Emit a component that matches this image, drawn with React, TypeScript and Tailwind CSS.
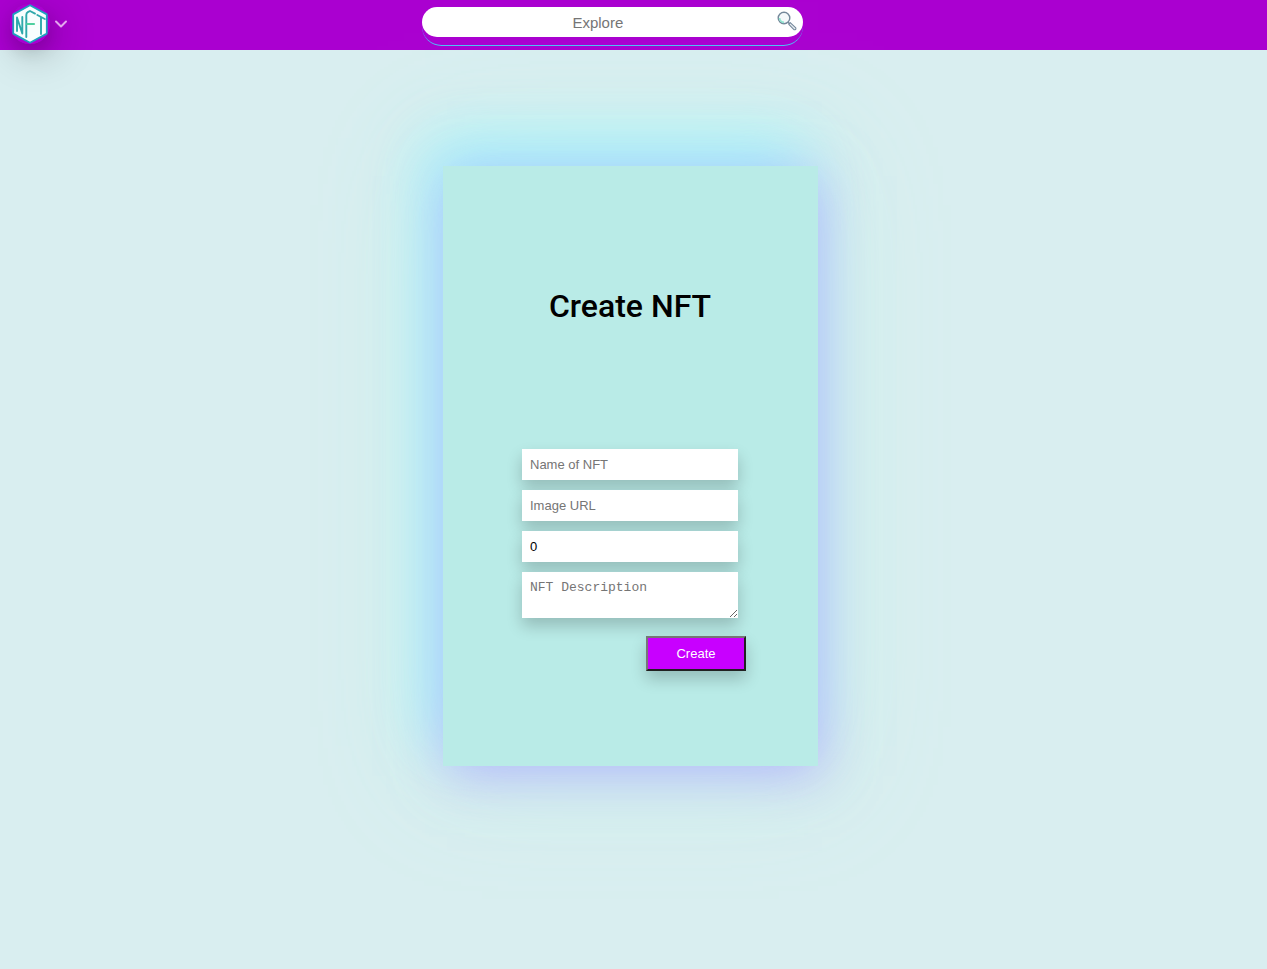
import React, { useState } from "react";

function Logo() {
  return (
    <svg viewBox="0 0 40 40" className="size-10" aria-hidden="true">
      <circle cx="20" cy="20" r="20" fill="#aa00d0" />
      <path d="M20 1.2 36.8 10.4V29.6L20 38.8 3.2 29.6V10.4Z" fill="#f8fefe" stroke="#1f9fc0" strokeWidth="1.8" strokeLinejoin="round" />
      <g fill="none" stroke="#2fa9ac" strokeWidth="1.9" strokeLinecap="round" strokeLinejoin="round">
        <path d="M7 27V13.500L12.300 29.500V13" />
        <path d="M16.300 33V11Q16.300 9 17.800 8.200L20 7 25 9.600" />
        <path d="M27.300 11 34.800 15M31 13V30" />
      </g>
      <path d="M17 20H24" fill="none" stroke="#4fd0a0" strokeWidth="2.2" strokeLinecap="round" />
    </svg>
  );
}

function SearchIcon() {
  return (
    <svg viewBox="0 0 20 20" className="size-5" fill="none" aria-hidden="true">
      <circle cx="7" cy="7" r="5.800" fill="#f4f8fa" stroke="#74889a" strokeWidth="1.400" />
      <path d="M2.600 7A4.500 4.500 0 0 0 7 11.300" stroke="#8fe6cf" strokeWidth="1.700" />
      <path d="M11 11.200 12.600 12.800" stroke="#74889a" strokeWidth="1.600" />
      <path d="M13.200 11.600 18.800 16.800Q19.300 18.800 17.200 18.800L11.800 13.400Z" fill="#e9edf2" stroke="#74889a" strokeWidth="1.100" strokeLinejoin="round" />
    </svg>
  );
}

function Header() {
  return (
    <header className="grid h-[50px] grid-cols-3 bg-[#aa00d0]">
      <div className="flex items-start pl-2.5 pt-1">
        <button type="button" aria-label="Menu" className="flex items-center gap-1">
          <span className="rounded-full shadow-[0_8px_16px_rgba(0,0,0,0.12),6px_10px_40px_rgba(0,0,0,0.25)]">
            <Logo />
          </span>
          <svg viewBox="0 0 14 10" className="h-2.5 w-3.5" fill="none" aria-hidden="true">
            <path d="M2 2.500 7 7.500 12 2.500" stroke="#e2a6ee" strokeWidth="2" strokeLinecap="round" strokeLinejoin="round" />
          </svg>
        </button>
      </div>
      <form className="relative mt-[7px] h-[39px] w-[381px] rounded-[20px] border-b border-[#4cc3f5]" onSubmit={(e) => e.preventDefault()}>
        <input
          aria-label="Explore"
          placeholder="Explore"
          className="block h-[30px] w-full rounded-full bg-white pl-3 pr-[42px] text-center text-[15px] text-black outline-none placeholder:text-[#757575]"
        />
        <button type="submit" aria-label="Search" className="absolute right-1.5 top-1">
          <SearchIcon />
        </button>
      </form>
    </header>
  );
}

const field =
  "block w-full bg-white px-2 text-[13px] text-black outline-none placeholder:text-[#757575] shadow-[0_8px_16px_rgba(0,0,0,0.2)]";

export default function App() {
  const [price, setPrice] = useState("0");
  return (
    <div className="min-h-screen bg-[#d9eef0] font-['Liberation_Sans',Arial,sans-serif]">
      <Header />
      <main className="flex justify-center pb-10 pr-1.5 pt-[116px]">
        <section className="flex h-[600px] w-[375px] flex-col items-center bg-[#b9ebe7] pr-px pt-[116px] shadow-[4px_10px_50px_rgba(180,150,255,0.65),-14px_-24px_60px_4px_rgba(150,245,255,0.8),0_0_110px_rgba(200,255,230,0.7)]">
          <h1 className="font-['Roboto',sans-serif] text-[32px] font-medium leading-[48px] text-black">Create NFT</h1>
          <form className="mt-[119px] flex w-[232px] flex-col" onSubmit={(e) => e.preventDefault()}>
            <div className="flex flex-col gap-2.5 px-2">
              <input aria-label="Name of NFT" placeholder="Name of NFT" className={`${field} h-[31px]`} />
              <input aria-label="Image URL" placeholder="Image URL" className={`${field} h-[31px]`} />
              <input aria-label="Price" inputMode="decimal" value={price} onChange={(e) => setPrice(e.target.value)} className={`${field} h-[31px]`} />
              <textarea
                aria-label="NFT Description"
                placeholder="NFT Description"
                className={`${field} h-[46px] resize py-2 font-['Liberation_Mono',monospace] leading-4`}
              />
            </div>
            <button
              type="submit"
              className="mt-[18px] h-[35px] w-[100px] self-end border-2 border-b-[#212121] border-l-[#767676] border-r-[#212121] border-t-[#767676] bg-[#c800ff] text-[13px] text-white shadow-[0_8px_16px_rgba(0,0,0,0.2)]"
            >
              Create
            </button>
          </form>
        </section>
      </main>
    </div>
  );
}
